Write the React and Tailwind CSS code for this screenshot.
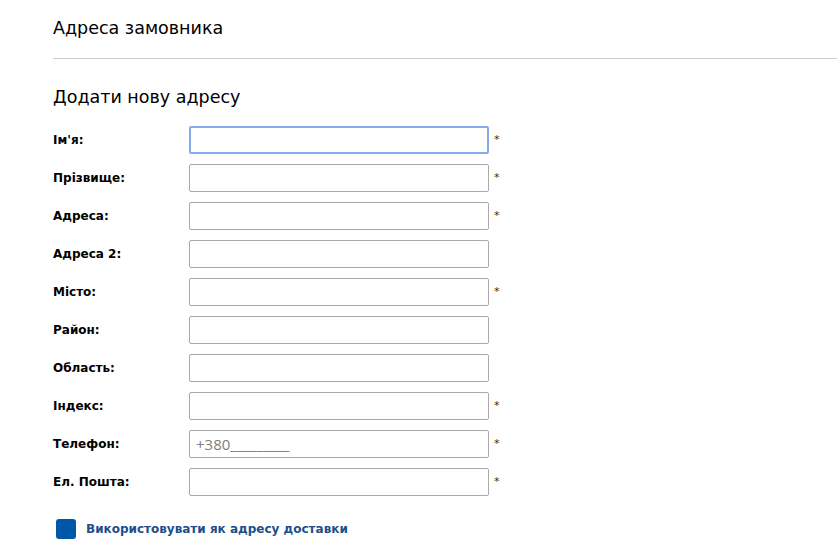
import React from 'react';

const fields = [
    { label: "Ім'я:", req: true, focus: true },
    { label: 'Прізвище:', req: true },
    { label: 'Адреса:', req: true },
    { label: 'Адреса 2:' },
    { label: 'Місто:', req: true },
    { label: 'Район:' },
    { label: 'Область:' },
    { label: 'Індекс:', req: true },
    { label: 'Телефон:', req: true, placeholder: '+380_________' },
    { label: 'Ел. Пошта:', req: true },
];

const App = () => {
    return (
        <div className="bg-white w-[837px] h-[555px] overflow-hidden text-black" style={{ fontFamily: '"DejaVu Sans", Verdana, sans-serif' }}>
            <div className="pl-[53px] pt-[17px]">
                <h1 className="text-[17.5px] leading-[22px] h-[41px]">Адреса замовника</h1>
            </div>
            <div className="ml-[53px] border-t border-[#cccccc]" />
            <div className="pl-[53px] pt-[26px]">
                <h2 className="text-[17.5px] leading-[24px] mb-[17px]">Додати нову адресу</h2>
                <div className="flex flex-col gap-[10px]">
                    {fields.map((f) => (
                        <div key={f.label} className="flex items-center h-[28px]">
                            <label className="w-[136px] text-[12px] font-bold">{f.label}</label>
                            <input
                                className={`w-[300px] h-[28px] rounded-[2px] px-[6px] text-[15px] outline-none ${
                                    f.focus ? 'border-2 border-[#86a8ef]' : 'border border-[#a9a9a9]'
                                } placeholder:text-[#808080]`}
                                placeholder={f.placeholder}
                                style={{ fontFamily: '"Open Sans", Arial, sans-serif' }}
                            />
                            {f.req && <span className="ml-[5px] text-[11px] text-[#3a3000]">*</span>}
                        </div>
                    ))}
                </div>
                <div className="flex items-center mt-[23px] ml-[3px]">
                    <span className="w-[20px] h-[20px] rounded-[3px] bg-[#0057a8]" />
                    <span className="ml-[10px] text-[12px] font-bold text-[#1c4f8c]">Використовувати як адресу доставки</span>
                </div>
            </div>
        </div>
    );
};

export default App;
